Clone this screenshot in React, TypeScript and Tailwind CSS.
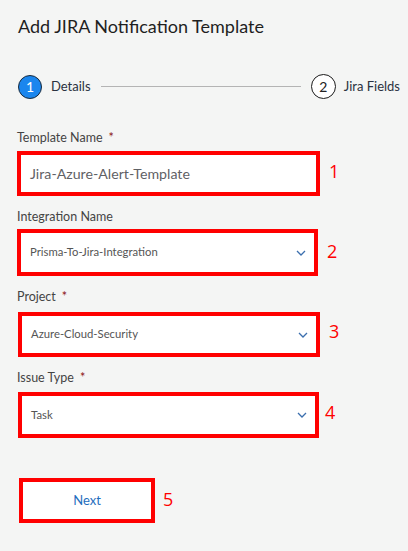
import React from "react";

const Chevron = () => (
    <svg width="10" height="6" viewBox="0 0 10 6" fill="none" className="shrink-0">
        <path d="M1 1l4 4 4-4" stroke="#3b6fae" strokeWidth="1.3" />
    </svg>
);

interface FieldProps {
    label: string;
    required?: boolean;
    marker: string;
    boxClass: string;
    markerClass: string;
    children: React.ReactNode;
}

const Field: React.FC<FieldProps> = ({ label, required, marker, boxClass, markerClass, children }) => (
    <div>
        <div className="text-[12.5px] leading-[16px] text-[#444]">
            {label}
            {required && <span className="ml-[6px] text-[#8a1010]">*</span>}
        </div>
        <div className="flex items-center">
            <div className={`flex items-center bg-white border-[4.5px] border-[#ff0000] ${boxClass}`}>
                {children}
            </div>
            <span className={`text-[18px] leading-none text-[#ff0000] ${markerClass}`} style={{ fontFamily: "'Open Sans', sans-serif" }}>
                {marker}
            </span>
        </div>
    </div>
);

export default function App() {
    return (
        <div className="w-[408px] h-[551px] bg-[#f4f5f4] overflow-hidden" style={{ fontFamily: "Lato, 'Liberation Sans', sans-serif" }}>
            <div className="pt-[14px] pl-[18px] text-[18px] leading-[24px] text-[#1f1f1f]">
                Add JIRA Notification Template
            </div>

            {/* stepper */}
            <div className="mt-[36px] pl-[18px] pr-[8px] flex items-center">
                <div className="w-[24px] h-[24px] rounded-full bg-[#1a86ee] border border-[#1b2b3c] flex items-center justify-center text-white text-[14px]">
                    1
                </div>
                <span className="ml-[9px] text-[13px] text-[#2a3140]">Details</span>
                <div className="mx-[10px] h-px flex-1 bg-[#b4b4b4]" />
                <div className="w-[25px] h-[25px] rounded-full bg-white border border-[#1b1b1b] flex items-center justify-center text-[#222] text-[14px]">
                    2
                </div>
                <span className="ml-[8px] text-[13px] text-[#2a3140]">Jira Fields</span>
            </div>

            <div className="pl-[17px]">
                <div className="mt-[31px]">
                    <Field label="Template Name" required marker="1" boxClass="mt-[5px] w-[303px] h-[45px] pl-[9px]" markerClass="ml-[9px]">
                        <span className="text-[14.2px] text-[#5f6165]">Jira-Azure-Alert-Template</span>
                    </Field>
                </div>
                <div className="mt-[13px]">
                    <Field label="Integration Name" marker="2" boxClass="mt-[4px] w-[301px] h-[47px] pl-[9px] pr-[8px] justify-between" markerClass="ml-[9px]">
                        <span className="text-[11.3px] text-[#555]">Prisma-To-Jira-Integration</span>
                        <Chevron />
                    </Field>
                </div>
                <div className="mt-[13px]">
                    <Field label="Project" required marker="3" boxClass="mt-[7px] ml-px w-[302px] h-[45px] pl-[9px] pr-[8px] justify-between" markerClass="ml-[9px]">
                        <span className="text-[11.3px] text-[#555]">Azure-Cloud-Security</span>
                        <Chevron />
                    </Field>
                </div>
                <div className="mt-[13px]">
                    <Field label="Issue Type" required marker="4" boxClass="mt-[6px] ml-px w-[301px] h-[46px] pl-[9px] pr-[8px] justify-between" markerClass="ml-[6px]">
                        <span className="text-[11.3px] text-[#555]">Task</span>
                        <Chevron />
                    </Field>
                </div>

                <div className="mt-[40px] flex items-center">
                    <button className="ml-[2px] w-[136px] h-[45px] bg-white border-[4.5px] border-[#ff0000] text-[13px] text-[#1f6ebd]">
                        Next
                    </button>
                    <span className="ml-[8px] -mt-[4px] text-[18px] leading-none text-[#ff0000]" style={{ fontFamily: "'Open Sans', sans-serif" }}>
                        5
                    </span>
                </div>
            </div>
        </div>
    );
}
